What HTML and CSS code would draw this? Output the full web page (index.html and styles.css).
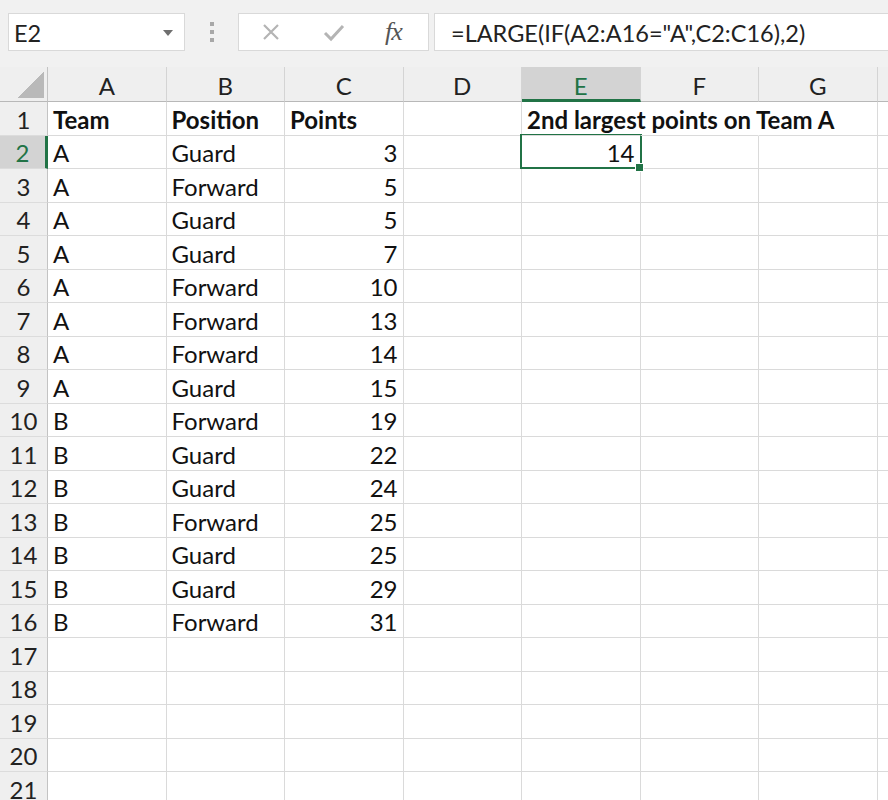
FILE: index.html
```html
<!DOCTYPE html>
<html lang="en">

<head>
    <meta charset="UTF-8">
    <meta name="viewport" content="width=device-width, initial-scale=1.0">
    <title>LARGE IF - Excel</title>
    <link rel="stylesheet" href="styles.css">
</head>

<body>
    <div class="toolbar">
        <div class="name-box">
            <span>E2</span>
            <svg class="caret" width="12" height="8" viewBox="0 0 12 8"><path d="M1 1h10L6 7z" fill="#6f6f6f"/></svg>
        </div>
        <div class="grip"><i></i><i></i><i></i></div>
        <div class="fx-box">
            <svg width="20" height="20" viewBox="0 0 20 20"><path d="M3 3l14 14M17 3L3 17" stroke="#b4b4b4" stroke-width="2.2" fill="none"/></svg>
            <svg width="22" height="20" viewBox="0 0 22 20"><path d="M2 11l6 6L20 4" stroke="#b4b4b4" stroke-width="3" fill="none"/></svg>
            <span class="fx">fx</span>
        </div>
        <div class="formula">=LARGE(IF(A2:A16="A",C2:C16),2)</div>
    </div>

    <div class="sheet">
        <!-- column headers -->
        <div class="corner"><span></span></div>
        <div class="col-head">A</div>
        <div class="col-head">B</div>
        <div class="col-head">C</div>
        <div class="col-head">D</div>
        <div class="col-head active">E</div>
        <div class="col-head">F</div>
        <div class="col-head">G</div>
        <div class="col-head"></div>

        <div class="row-head">1</div>
        <div class="cell bold">Team</div>
        <div class="cell bold">Position</div>
        <div class="cell bold">Points</div>
        <div class="cell"></div>
        <div class="cell bold spill">2nd largest points on Team A</div>
        <div class="cell spill"></div>
        <div class="cell"></div>
        <div class="cell"></div>

        <div class="row-head active">2</div>
        <div class="cell">A</div>
        <div class="cell">Guard</div>
        <div class="cell num">3</div>
        <div class="cell"></div>
        <div class="cell num selected">14</div>
        <div class="cell"></div>
        <div class="cell"></div>
        <div class="cell"></div>

        <div class="row-head">3</div>
        <div class="cell">A</div>
        <div class="cell">Forward</div>
        <div class="cell num">5</div>
        <div class="cell"></div><div class="cell"></div><div class="cell"></div><div class="cell"></div><div class="cell"></div>

        <div class="row-head">4</div>
        <div class="cell">A</div>
        <div class="cell">Guard</div>
        <div class="cell num">5</div>
        <div class="cell"></div><div class="cell"></div><div class="cell"></div><div class="cell"></div><div class="cell"></div>

        <div class="row-head">5</div>
        <div class="cell">A</div>
        <div class="cell">Guard</div>
        <div class="cell num">7</div>
        <div class="cell"></div><div class="cell"></div><div class="cell"></div><div class="cell"></div><div class="cell"></div>

        <div class="row-head">6</div>
        <div class="cell">A</div>
        <div class="cell">Forward</div>
        <div class="cell num">10</div>
        <div class="cell"></div><div class="cell"></div><div class="cell"></div><div class="cell"></div><div class="cell"></div>

        <div class="row-head">7</div>
        <div class="cell">A</div>
        <div class="cell">Forward</div>
        <div class="cell num">13</div>
        <div class="cell"></div><div class="cell"></div><div class="cell"></div><div class="cell"></div><div class="cell"></div>

        <div class="row-head">8</div>
        <div class="cell">A</div>
        <div class="cell">Forward</div>
        <div class="cell num">14</div>
        <div class="cell"></div><div class="cell"></div><div class="cell"></div><div class="cell"></div><div class="cell"></div>

        <div class="row-head">9</div>
        <div class="cell">A</div>
        <div class="cell">Guard</div>
        <div class="cell num">15</div>
        <div class="cell"></div><div class="cell"></div><div class="cell"></div><div class="cell"></div><div class="cell"></div>

        <div class="row-head">10</div>
        <div class="cell">B</div>
        <div class="cell">Forward</div>
        <div class="cell num">19</div>
        <div class="cell"></div><div class="cell"></div><div class="cell"></div><div class="cell"></div><div class="cell"></div>

        <div class="row-head">11</div>
        <div class="cell">B</div>
        <div class="cell">Guard</div>
        <div class="cell num">22</div>
        <div class="cell"></div><div class="cell"></div><div class="cell"></div><div class="cell"></div><div class="cell"></div>

        <div class="row-head">12</div>
        <div class="cell">B</div>
        <div class="cell">Guard</div>
        <div class="cell num">24</div>
        <div class="cell"></div><div class="cell"></div><div class="cell"></div><div class="cell"></div><div class="cell"></div>

        <div class="row-head">13</div>
        <div class="cell">B</div>
        <div class="cell">Forward</div>
        <div class="cell num">25</div>
        <div class="cell"></div><div class="cell"></div><div class="cell"></div><div class="cell"></div><div class="cell"></div>

        <div class="row-head">14</div>
        <div class="cell">B</div>
        <div class="cell">Guard</div>
        <div class="cell num">25</div>
        <div class="cell"></div><div class="cell"></div><div class="cell"></div><div class="cell"></div><div class="cell"></div>

        <div class="row-head">15</div>
        <div class="cell">B</div>
        <div class="cell">Guard</div>
        <div class="cell num">29</div>
        <div class="cell"></div><div class="cell"></div><div class="cell"></div><div class="cell"></div><div class="cell"></div>

        <div class="row-head">16</div>
        <div class="cell">B</div>
        <div class="cell">Forward</div>
        <div class="cell num">31</div>
        <div class="cell"></div><div class="cell"></div><div class="cell"></div><div class="cell"></div><div class="cell"></div>

        <div class="row-head">17</div>
        <div class="cell"></div><div class="cell"></div><div class="cell"></div><div class="cell"></div>
        <div class="cell"></div><div class="cell"></div><div class="cell"></div><div class="cell"></div>

        <div class="row-head">18</div>
        <div class="cell"></div><div class="cell"></div><div class="cell"></div><div class="cell"></div>
        <div class="cell"></div><div class="cell"></div><div class="cell"></div><div class="cell"></div>

        <div class="row-head">19</div>
        <div class="cell"></div><div class="cell"></div><div class="cell"></div><div class="cell"></div>
        <div class="cell"></div><div class="cell"></div><div class="cell"></div><div class="cell"></div>

        <div class="row-head">20</div>
        <div class="cell"></div><div class="cell"></div><div class="cell"></div><div class="cell"></div>
        <div class="cell"></div><div class="cell"></div><div class="cell"></div><div class="cell"></div>

        <div class="row-head">21</div>
        <div class="cell"></div><div class="cell"></div><div class="cell"></div><div class="cell"></div>
        <div class="cell"></div><div class="cell"></div><div class="cell"></div><div class="cell"></div>
    </div>
</body>

</html>
```

FILE: styles.css
```css
* {
    margin: 0;
    padding: 0;
    box-sizing: border-box;
}

html,
body {
    height: 100%;
    overflow: hidden;
}

body {
    font-family: Lato, "Liberation Sans", sans-serif;
    font-size: 24px;
    color: #111;
    background: #fff;
}

/* 公式栏 */
.toolbar {
    height: 67px;
    background: #f1f1f1;
    display: flex;
    align-items: flex-start;
    padding: 13px 0 0 8px;
    font-size: 23.5px;
}

.name-box {
    width: 177px;
    height: 38px;
    background: #fff;
    border: 1px solid #d9d9d9;
    display: flex;
    align-items: center;
    justify-content: space-between;
    padding: 1px 10px 0 5px;
    color: #222;
}

.grip {
    width: 53px;
    height: 38px;
    display: flex;
    flex-direction: column;
    align-items: center;
    justify-content: center;
    gap: 4px;
}

.grip i {
    width: 4px;
    height: 4px;
    background: #a8a8a8;
}

.fx-box {
    width: 191px;
    height: 38px;
    background: #fff;
    border: 1px solid #d9d9d9;
    display: grid;
    grid-template-columns: repeat(3, 63px);
    place-items: center;
}

.fx {
    font-family: "Liberation Serif", serif;
    font-style: italic;
    font-size: 26px;
    color: #555;
    letter-spacing: -1px;
    margin-left: -6px;
}

.formula {
    flex: 1;
    height: 38px;
    margin-left: 5px;
    background: #fff;
    border: 1px solid #d9d9d9;
    border-right: none;
    display: flex;
    align-items: center;
    padding: 1px 0 0 16px;
    color: #222;
    white-space: nowrap;
}

/* 表格 */
.sheet {
    display: grid;
    grid-template-columns: 48px repeat(7, 118.5px) 1fr;
    grid-template-rows: 35px;
    grid-auto-rows: 33.5px;
}

.corner,
.col-head,
.row-head {
    background: #efefef;
    color: #222;
    display: flex;
    align-items: center;
    justify-content: center;
}

.corner {
    border-right: 1px solid #c3c3c3;
    border-bottom: 1px solid #b8b8b8;
    align-items: flex-end;
    justify-content: flex-end;
    padding: 0 3px 3px 0;
}

.corner span {
    width: 27px;
    height: 27px;
    background: linear-gradient(to top left, #b9b9b9 50%, transparent 50%);
}

.col-head {
    border-right: 1px solid #d4d4d4;
    border-bottom: 1px solid #b8b8b8;
    padding-top: 2px;
}

.row-head {
    border-right: 1px solid #c3c3c3;
    border-bottom: 1px solid #dcdcdc;
    padding-top: 2px;
}

.col-head.active {
    background: #d3d3d3;
    color: #217346;
    border-bottom: 3px solid #217346;
    padding-top: 4px;
}

.row-head.active {
    background: #d3d3d3;
    color: #217346;
    border-right: 3px solid #217346;
}

.cell {
    position: relative;
    border-right: 1px solid #dadada;
    border-bottom: 1px solid #dadada;
    padding: 2px 5px 0;
    display: flex;
    align-items: center;
    white-space: nowrap;
}

.cell.bold {
    font-weight: 700;
}

.cell.num {
    justify-content: flex-end;
}

/* 文字溢出到右边的格子时不画竖线 */
.cell.spill {
    border-right-color: transparent;
    overflow: visible;
    z-index: 1;
}

.cell.selected::after {
    content: "";
    position: absolute;
    top: -2px;
    left: -2px;
    right: -2px;
    bottom: -1px;
    border: 2px solid #217346;
}

.cell.selected::before {
    content: "";
    position: absolute;
    right: -4px;
    bottom: -4px;
    width: 7px;
    height: 7px;
    background: #217346;
    border: 1px solid #fff;
    z-index: 2;
}
```
